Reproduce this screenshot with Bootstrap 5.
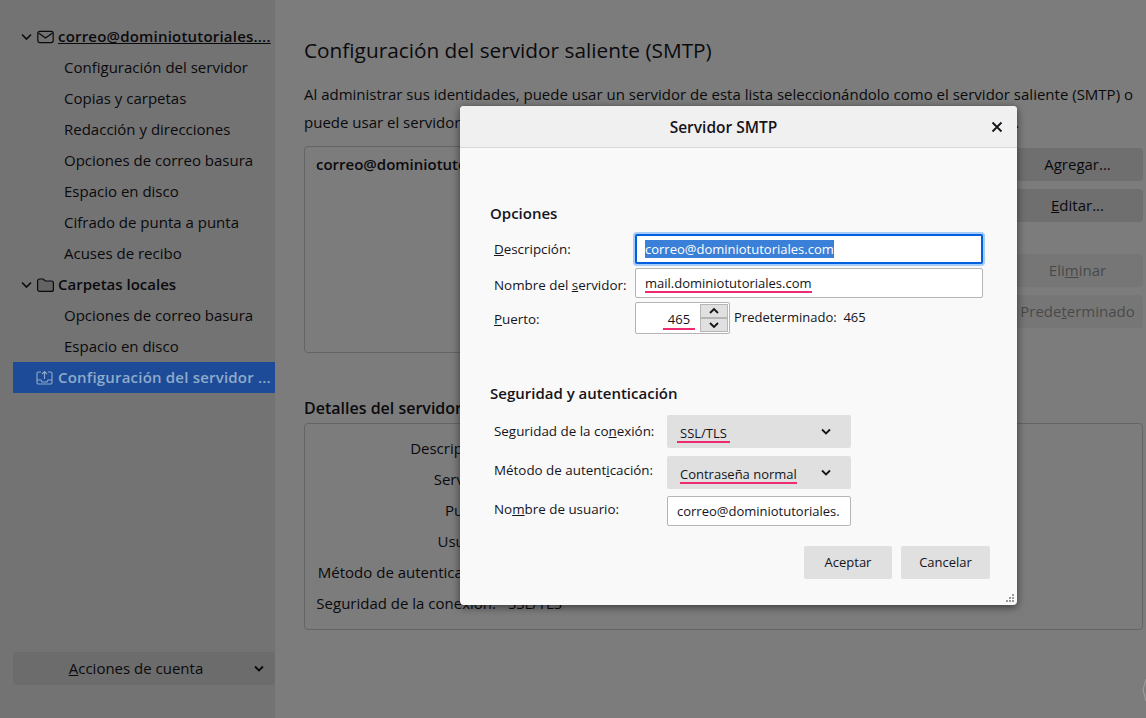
<!DOCTYPE html>
<html lang="es">
<head>
<meta charset="utf-8">
<title>Servidor SMTP</title>
<link href="https://cdn.jsdelivr.net/npm/bootstrap@5.3.0/dist/css/bootstrap.min.css" rel="stylesheet">
<script src="https://cdn.jsdelivr.net/npm/bootstrap@5.3.0/dist/js/bootstrap.bundle.min.js"></script>
<style>
html,body{height:718px;overflow:hidden}
body{font-family:"Open Sans","Noto Sans",sans-serif;font-size:15px;color:#15141a;background:#f8f8f8;position:relative}
.app-wrap{height:718px}
.side-pane{width:275px;flex:none;background:#e6e6e6;padding:21px 0 33px 13px}
.tree-row{height:31px;padding-left:51px;white-space:nowrap;overflow:hidden;flex:none}
.tree-head{padding-left:7px;font-weight:600;gap:4px}
.tree-wide{letter-spacing:.2px}
.tree-active{background:#1d4b98;color:#8fabc9;padding-left:23px;gap:5px;font-weight:600;position:relative;z-index:2}
.acct-btn{height:33px;background:#d8d8d8;border-radius:4px;position:relative}
.acct-btn svg{position:absolute;right:11px;top:13px}
.main-pane{padding:36px 3px 0 29px;min-width:0}
.page-title{font-size:20.8px;font-weight:400;line-height:28px;margin:0 0 16px}
.page-text{line-height:28px;margin:0 0 10px;white-space:nowrap}
.under-dialog{display:inline-block;width:551px;visibility:hidden;overflow:hidden;vertical-align:bottom}
.list-box{height:207px;border:1px solid #c8c8c8;border-radius:4px;padding:6px 11px;font-weight:600}
.side-btns{width:131px;flex:none;padding-top:2px}
.ghost-btn{height:33px;background:#dedede;border-radius:4px;margin-bottom:8px}
.ghost-gap{margin-bottom:32px}
.is-off{opacity:.45}
.sec-title{font-size:16px;font-weight:600;margin:45px 0 5px;line-height:20px}
.detail-box{height:207px;border:1px solid #c8c8c8;border-radius:4px;padding-top:9px}
.detail-row{height:31px;line-height:31px;white-space:nowrap}
.detail-label{width:191px;text-align:right;flex:none}
.detail-val{margin-left:12px}
.dim-layer{position:absolute;inset:0;background:rgba(0,0,0,.5)}
.smtp-dialog{position:absolute;left:460px;top:106px;width:557px;height:499px;background:#f9f9fa;border-radius:4px;box-shadow:0 2px 8px rgba(0,0,0,.55);font-size:13px;overflow:hidden;z-index:3}
.smtp-head{height:42px;background:#f0f0f1;border-bottom:1px solid #d7d7db;font-weight:600;font-size:15.5px;position:relative;padding:2px 30px 0 0}
.smtp-close{position:absolute;right:14px;top:15px;line-height:0}
.smtp-body{padding:55px 27px 0 30px}
.group-title{font-size:15px;font-weight:600;line-height:20px;margin:0 0 11px}
.group-next{margin:49px 0 12px}
.fld-row{padding-left:4px;margin-bottom:4px}
.fld-tight{margin-bottom:8px}
.fld-tight2{margin-bottom:7px}
.fld-label{flex:none;font-size:13.4px}
.lbl-down{margin-top:4px}
.lbl-down1{margin-top:2px}
.lbl-up{margin-top:-4px}
.w-a{width:141px}
.w-b{width:173px}
.pad-box{padding-right:7px}
.text-box{height:30px;background:#fff;border:1px solid #b5b5b5;border-radius:2px;padding:0 9px;line-height:28px;white-space:nowrap;overflow:hidden}
.is-focus{border:2px solid #0060df;box-shadow:0 0 0 2px #a6cdf8;line-height:26px;padding:0 8px}
.sel-text{background:#3a80d8;color:#fff}
.mark-line{border-bottom:2px solid #ee2a72;display:inline-block;line-height:15px}
.mark-pad{padding:0 3px;margin-left:-3px}
.drop-box .mark-line{margin-top:5px}
.spin-box{width:95px;height:32px;background:#fff;border:1px solid #b5b5b5;border-radius:2px;padding:0 1px 0 27px}
.spin-val{width:32px;text-align:center;line-height:15px;margin-top:9px;border-bottom:2px solid #ee2a72;height:18px}
.spin-btns{width:28px;margin-left:auto;margin-top:1px}
.spin-btn{height:14px;background:#e0e0e1;border:1px solid #b5b5b5;line-height:0;text-align:center}
.drop-box{width:184px;height:33px;background:#e0e0e1;border-radius:2px;padding:0 20px 0 13px}
.user-box{width:184px}
.dlg-row{gap:9px;margin-top:20px}
.dlg-btn{width:88px;height:33px;background:#e0e0e1;border-radius:2px;line-height:33px;text-align:center}
.dlg-wide{width:89px}
.grip{position:absolute;right:2px;bottom:2px;line-height:0}
.edge-mark{position:absolute;right:0;top:678px;line-height:0}
</style>
</head>
<body>
<div class="app-wrap d-flex">
  <nav class="side-pane d-flex flex-column">
    <div class="tree-row tree-head d-flex align-items-center">
      <svg width="13" height="13" viewBox="0 0 13 13" fill="none" stroke="#15141a" stroke-width="1.6"><path d="M2 4.500l4.500 4.500L11 4.500"/></svg>
      <svg width="17" height="14" viewBox="0 0 17 14" fill="none" stroke="#15141a" stroke-width="1.2"><rect x=".8" y="1.4" width="15.4" height="11.2" rx="2"/><path d="M1.500 3l7 5 7-5"/></svg>
      <u class="tree-wide">correo@dominiotutoriales....</u>
    </div>
    <div class="tree-row d-flex align-items-center">Configuración del servidor</div>
    <div class="tree-row d-flex align-items-center">Copias y carpetas</div>
    <div class="tree-row d-flex align-items-center">Redacción y direcciones</div>
    <div class="tree-row d-flex align-items-center">Opciones de correo basura</div>
    <div class="tree-row d-flex align-items-center">Espacio en disco</div>
    <div class="tree-row d-flex align-items-center">Cifrado de punta a punta</div>
    <div class="tree-row d-flex align-items-center">Acuses de recibo</div>
    <div class="tree-row tree-head d-flex align-items-center">
      <svg width="13" height="13" viewBox="0 0 13 13" fill="none" stroke="#15141a" stroke-width="1.6"><path d="M2 4.500l4.500 4.500L11 4.500"/></svg>
      <svg width="17" height="14" viewBox="0 0 17 14"><path d="M.6 3a2 2 0 0 1 2-2h3.600l2 2h6.200a2 2 0 0 1 2 2v6.400a2 2 0 0 1-2 2H2.600a2 2 0 0 1-2-2z" fill="#c8c8c8" stroke="#15141a" stroke-width="1.200"/></svg>
      <span>Carpetas locales</span>
    </div>
    <div class="tree-row d-flex align-items-center">Opciones de correo basura</div>
    <div class="tree-row d-flex align-items-center">Espacio en disco</div>
    <div class="tree-row tree-active d-flex align-items-center">
      <svg width="17" height="15" viewBox="0 0 17 15" fill="none" stroke="#8fabc9" stroke-width="1.100"><path d="M5 2H2.500a1.500 1.500 0 0 0-1.500 1.500v9A1.500 1.500 0 0 0 2.500 14h12a1.500 1.500 0 0 0 1.500-1.500v-9A1.500 1.500 0 0 0 14.500 2H12"/><path d="M1 10h4l1 2h5l1-2h4M8.500 9V2M6 4l2.500-2.500L11 4"/></svg>
      <span class="tree-wide">Configuración del servidor ...</span>
    </div>
    <div class="acct-btn mt-auto d-flex align-items-center justify-content-center pe-3">
      <span><u>A</u>cciones de cuenta</span>
      <svg width="10" height="8" viewBox="0 0 10 8" fill="none" stroke="#15141a" stroke-width="1.800"><path d="M1 1.500l4 4 4-4"/></svg>
    </div>
  </nav>
  <main class="main-pane flex-grow-1">
    <h1 class="page-title">Configuración del servidor saliente (SMTP)</h1>
    <p class="page-text">Al administrar sus identidades, puede usar un servidor de esta lista seleccionándolo como el servidor saliente (SMTP) o<br>puede usar el servidor <span class="under-dialog">predeterminado de esta lista seleccionando «Usar servidor predeterminado»</span>.</p>
    <div class="d-flex">
      <div class="list-box flex-grow-1">correo@dominiotutoriales.com</div>
      <div class="side-btns">
        <div class="ghost-btn d-flex align-items-center justify-content-center"><span>A<u>g</u>regar...</span></div>
        <div class="ghost-btn ghost-gap d-flex align-items-center justify-content-center"><span><u>E</u>ditar...</span></div>
        <div class="ghost-btn is-off d-flex align-items-center justify-content-center"><span>Eli<u>m</u>inar</span></div>
        <div class="ghost-btn is-off d-flex align-items-center justify-content-center"><span>Prede<u>t</u>erminado</span></div>
      </div>
    </div>
    <div class="sec-title">Detalles del servidor</div>
    <div class="detail-box">
      <div class="detail-row d-flex"><span class="detail-label">Descripción:</span></div>
      <div class="detail-row d-flex"><span class="detail-label">Servidor:</span></div>
      <div class="detail-row d-flex"><span class="detail-label">Puerto:</span></div>
      <div class="detail-row d-flex"><span class="detail-label">Usuario:</span></div>
      <div class="detail-row d-flex"><span class="detail-label">Método de autenticación:</span></div>
      <div class="detail-row d-flex"><span class="detail-label">Seguridad de la conexión:</span><span class="detail-val">SSL/TLS</span></div>
    </div>
  </main>
</div>
<div class="dim-layer"></div>
<div class="edge-mark"><svg width="4" height="24" viewBox="0 0 4 24" fill="none" stroke="#a0a0a0"><path d="M4 1L1 12l3 11"/></svg></div>
<section class="smtp-dialog">
  <header class="smtp-head d-flex align-items-center justify-content-center">
    <span>Servidor SMTP</span>
    <span class="smtp-close"><svg width="12" height="12" viewBox="0 0 12 12" fill="none" stroke="#15141a" stroke-width="1.800"><path d="M1.500 1.500l9 9M10.500 1.500l-9 9"/></svg></span>
  </header>
  <div class="smtp-body">
    <div class="group-title">Opciones</div>
    <div class="pad-box">
      <div class="fld-row d-flex align-items-center">
        <span class="fld-label w-a"><u>D</u>escripción:</span>
        <div class="text-box is-focus flex-grow-1"><span class="sel-text">correo@dominiotutoriales.com</span></div>
      </div>
      <div class="fld-row d-flex align-items-center">
        <span class="fld-label w-a lbl-down">Nombre del <u>s</u>ervidor:</span>
        <div class="text-box flex-grow-1"><span class="mark-line">mail.dominiotutoriales.com</span></div>
      </div>
      <div class="fld-row d-flex align-items-center">
        <span class="fld-label w-a lbl-down1"><u>P</u>uerto:</span>
        <div class="spin-box d-flex">
          <div class="spin-val">465</div>
          <div class="spin-btns">
            <div class="spin-btn"><svg width="10" height="12" viewBox="0 0 10 12" fill="none" stroke="#15141a" stroke-width="1.800"><path d="M1 8l4-4 4 4"/></svg></div>
            <div class="spin-btn"><svg width="10" height="12" viewBox="0 0 10 12" fill="none" stroke="#15141a" stroke-width="1.800"><path d="M1 4l4 4 4-4"/></svg></div>
          </div>
        </div>
        <span class="ms-1">Predeterminado:&nbsp; 465</span>
      </div>
    </div>
    <div class="group-title group-next">Seguridad y autenticación</div>
    <div class="fld-row fld-tight d-flex align-items-center">
      <span class="fld-label w-b">Seguridad de la co<u>n</u>exión:</span>
      <div class="drop-box d-flex align-items-center justify-content-between">
        <span class="mark-line mark-pad">SSL/TLS</span>
        <svg width="10" height="8" viewBox="0 0 10 8" fill="none" stroke="#15141a" stroke-width="1.800"><path d="M1 1.500l4 4 4-4"/></svg>
      </div>
    </div>
    <div class="fld-row fld-tight2 d-flex align-items-center">
      <span class="fld-label w-b lbl-up">Método de autent<u>i</u>cación:</span>
      <div class="drop-box d-flex align-items-center justify-content-between">
        <span class="mark-line">Contraseña normal</span>
        <svg width="10" height="8" viewBox="0 0 10 8" fill="none" stroke="#15141a" stroke-width="1.800"><path d="M1 1.500l4 4 4-4"/></svg>
      </div>
    </div>
    <div class="fld-row d-flex align-items-center">
      <span class="fld-label w-b lbl-up">No<u>m</u>bre de usuario:</span>
      <div class="text-box user-box">correo@dominiotutoriales.</div>
    </div>
    <div class="d-flex justify-content-end dlg-row">
      <div class="dlg-btn">Aceptar</div>
      <div class="dlg-btn dlg-wide">Cancelar</div>
    </div>
  </div>
  <span class="grip"><svg width="10" height="10" viewBox="0 0 10 10" fill="#9a9aa0"><rect x="7" y="1" width="2" height="2"/><rect x="4" y="4" width="2" height="2"/><rect x="7" y="4" width="2" height="2"/><rect x="1" y="7" width="2" height="2"/><rect x="4" y="7" width="2" height="2"/><rect x="7" y="7" width="2" height="2"/></svg></span>
</section>
</body>
</html>
